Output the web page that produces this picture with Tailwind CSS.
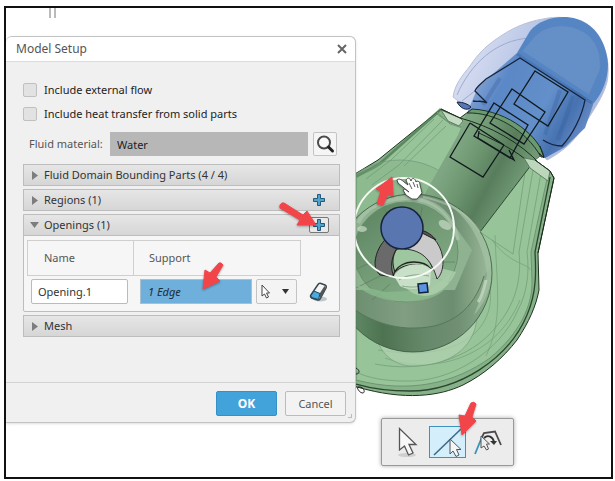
<!DOCTYPE html>
<html lang="en">
<head>
  <meta charset="UTF-8" />
  <meta name="viewport" content="width=device-width, initial-scale=1" />
  <title>Model Setup</title>
  <script src="https://cdn.jsdelivr.net/npm/@tailwindcss/browser@4"></script>
</head>
<body class="min-h-screen flex flex-col bg-white pt-[6px] pl-1 pr-[2px] pb-[2px] font-['Noto_Sans','Open_Sans',sans-serif] text-[11px] leading-4 text-[#333]">
  <main class="relative flex-1 border-2 border-[#111] overflow-hidden bg-white">

    <!-- 3D viewport -->
    <svg class="absolute left-0 top-0 w-[605px] h-[468px]" viewBox="6 8 605 468" fill="none" aria-hidden="true">
      <defs>
        <linearGradient id="neck" x1="445" y1="165" x2="510" y2="200" gradientUnits="userSpaceOnUse">
          <stop offset="0" stop-color="#7fa682" /><stop offset=".3" stop-color="#6f9872" /><stop offset=".65" stop-color="#587d5c" /><stop offset="1" stop-color="#719975" />
        </linearGradient>
        <linearGradient id="ball" x1="356" y1="0" x2="494" y2="0" gradientUnits="userSpaceOnUse">
          <stop offset="0" stop-color="#6d8f70" /><stop offset=".35" stop-color="#819e83" /><stop offset=".7" stop-color="#6c8d70" /><stop offset=".85" stop-color="#86a587" /><stop offset="1" stop-color="#9fbd9f" />
        </linearGradient>
        <linearGradient id="band" x1="356" y1="0" x2="492" y2="0" gradientUnits="userSpaceOnUse">
          <stop offset="0" stop-color="#5f8763" /><stop offset=".2" stop-color="#4d7351" /><stop offset=".5" stop-color="#66886a" /><stop offset=".75" stop-color="#708f73" /><stop offset="1" stop-color="#8cb08d" />
        </linearGradient>
        <linearGradient id="bowl" x1="370" y1="200" x2="440" y2="300" gradientUnits="userSpaceOnUse">
          <stop offset="0" stop-color="#5d8461" /><stop offset=".5" stop-color="#739b76" /><stop offset="1" stop-color="#86b189" />
        </linearGradient>
        <linearGradient id="cap" x1="475" y1="80" x2="590" y2="145" gradientUnits="userSpaceOnUse">
          <stop offset="0" stop-color="#86a3d4" /><stop offset=".2" stop-color="#5b88c6" /><stop offset=".55" stop-color="#638fca" /><stop offset=".75" stop-color="#4672b0" /><stop offset="1" stop-color="#7898cf" />
        </linearGradient>
        <linearGradient id="shell" x1="455" y1="50" x2="600" y2="120" gradientUnits="userSpaceOnUse">
          <stop offset="0" stop-color="#dfe4f4" /><stop offset=".4" stop-color="#b9c6e6" /><stop offset="1" stop-color="#a9b9df" />
        </linearGradient>
        <clipPath id="ballClip"><circle cx="413" cy="273" r="79" /></clipPath>
      </defs>

      <path d="M50 8v10M55 8v10" stroke="#777" />

      <!-- blue cap -->
      <path d="M453 97C455 84 462 76 470 66C478 54 485 47 495 40C510 29 525 22 543 19C570 13 590 24 599 38C607 49 610 66 607 82C603 98 592 112 583 127C574 142 562 152 547 160L520 130L470 110Z" fill="url(#shell)" stroke="#b9c1d8" />
      <path d="M457 95C470 65 495 40 530 38M462 101L517 58" stroke="#9fabce" />
      <path d="M517 53L594 102L585 128L565 147L545 158L467 113L478 87Z" fill="url(#cap)" />
      <path d="M517 53L530 31C540 19 560 14 577 19C596 25 606 42 608 64C608 80 602 93 594 103Z" fill="#5585c2" />
      <path d="M522 51L535 36C545 26 560 24 572 27C594 33 602 50 600 70L589 95Z" fill="#648fc7" stroke="#5b86c1" />
      <path d="M517 54L592 103" stroke="#3e6ba9" stroke-width="3" opacity=".6" />
      <path d="M560 90L545 135M573 96L558 140M500 78L483 105" stroke="#365e9c" stroke-width="4" opacity=".3" />
      <path d="M487 103L475 91C476 87 482 83 486 79L520 58L585 100C582 116 573 134 562 146C556 146 549 144 543 140M473 101C478 102 482 100 487 103" stroke="#15233c" stroke-width="1.3" />
      <path d="M457 102C463 102 468 104 471 107C467 112 460 108 457 102Z" fill="#5577b4" stroke="#16233a" />

      <!-- green body -->
      <path d="M441 109L460 118L468 112C497 113 525 129 541 155L535 160L550 171L554 178L538 253L539 290C536 306 529 322 517 340C503 358 485 374 463 385C440 396 405 401 357 387L340 380V183L378 160Z" fill="#86b189" stroke="#1f3321" />
      <path d="M437 114L384 160L356 178V380C410 394 455 383 490 358C520 333 533 305 532 280L531 252L547 179L534 165L500 140L448 122Z" fill="#98c49a" stroke="#6c966f" />
      <path d="M434 119L391 160L366 179M443 120L399 165L372 185M446 126L404 166" stroke="#7ba57f" />
      <path d="M356 176C366 171 378 167 384 160L441 109" stroke="#4b7a4f" stroke-width="3" opacity=".65" />
      <path d="M550 177L535 252C536 270 537 292 527 315C508 360 458 391 410 391C388 391 370 388 356 384" stroke="#29472c" stroke-width="1.3" />
      <path d="M541 173L527 252C530 275 526 295 518 310C500 352 450 383 405 381C385 381 368 378 356 372M533 170L519 252C522 280 515 305 496 327C470 360 420 373 375 364M526 165L513 254L480 232" stroke="#709a73" opacity=".7" />
      <path d="M492 240C510 265 530 264 530 270M488 280C500 320 470 365 378 350M495 235C497 290 503 320 486 356M520 300C495 360 430 375 385 358" stroke="#6f9b73" opacity=".6" />
      <path d="M378 343C386 360 400 366 413 366C447 366 474 350 477 318Z" fill="#b2d2b1" stroke="#78a07b" opacity=".7" />
      <circle cx="400" cy="237" r="77" fill="#74a278" fill-opacity=".3" stroke="#73977a" stroke-opacity=".7" />
      <path d="M437 112L450 124L475 132" stroke="#729a76" />
      <path d="M441 110L460 118L463 121L459 126L448 121Z" fill="#c6dcc5" stroke="#5b7f5f" />

      <!-- neck -->
      <path d="M467 113C495 112 526 130 541 155L535 160L480 232L423 197L458 135Z" fill="url(#neck)" />
      <path d="M535 160L480 232" stroke="#2f4b32" />
      <path d="M467 113C495 112 526 130 541 157L544 157C540 138 510 111 472 109Z" fill="#6c9a70" stroke="#1e3320" />
      <path d="M441 109L460 118C490 126 520 142 541 165M479 133C500 143 515 150 530 163M540 146L544 158L539 153" stroke="#1a2c1c" />
      <path d="M524 158L535 160L550 171L548 181L530 168Z" fill="#bcd7bb" stroke="#5c825f" />
      <path d="M535 160L550 171L554 178L538 253" stroke="#1a2c1c" />

      <!-- ball -->
      <circle cx="413" cy="273" r="79" fill="url(#ball)" />
      <g clip-path="url(#ballClip)">
        <path d="M340 297C360 319 392 329 415 328C450 328 474 310 484 276L500 250V370H340Z" fill="url(#band)" />
        <path d="M425 192C460 205 482 232 487 275C484 290 480 300 474 315C498 290 501 240 470 210Z" fill="#a3c2a3" opacity=".75" />
        <path d="M340 297C360 319 392 329 415 328C450 328 474 310 484 276" stroke="#57775a" />
        <path d="M478 302C482 297 484 288 486 280" stroke="#cbdccb" stroke-width="3" opacity=".7" />
        <path d="M340 200C370 185 425 190 447 215L472 250L455 290L340 290Z" fill="#8fb290" />
        <ellipse cx="406" cy="252" rx="52" ry="50" fill="url(#bowl)" stroke="#69906d" />
        <path d="M358 223C368 202 402 192 428 202C444 208 454 222 458 240" stroke="#b4ccb4" stroke-width="4" opacity=".55" />
        <path d="M350 272L372 262M352 290L380 276M372 300L390 284M455 262L437 262M450 282L432 278M385 210L390 222M422 207L420 222" stroke="#55795a" opacity=".6" />
        <path d="M356 285C376 305 430 308 446 288L452 272L430 290L385 292Z" fill="#8bb98d" opacity=".8" />
        <ellipse cx="362" cy="229" rx="5" ry="3" fill="#c9dcc8" opacity=".7" />
        <ellipse cx="445" cy="225" rx="7" ry="4" fill="#c9dac8" opacity=".7" transform="rotate(30 445 225)" />
      </g>
      <circle cx="413" cy="273" r="79" stroke="#3c5a3f" stroke-opacity=".8" />
      <path d="M480 232C468 213 448 202 423 197" stroke="#b0c4b0" stroke-width="2" opacity=".6" />
      <path d="M400 280C410 300 440 305 456 272L440 268Z" fill="#b5d4b4" opacity=".7" />

      <!-- inlet opening -->
      <path d="M375 262C376 252 381 243 387 238L397 248C391 258 390 268 394 277L380 275C376 271 375 267 375 262Z" fill="#696a69" stroke="#222" />
      <path d="M397 249C405 247 413 248 420 252C427 257 431 263 433 270C425 264 406 261 395 272C392 264 392 256 397 249Z" fill="#9fc79f" stroke="#222" />
      <path d="M420 230C434 234 443 248 443 262C443 269 441 275 437 279C432 262 424 250 404 249Z" fill="#c9cac9" stroke="#333" />
      <path d="M420 230C427 231 433 236 436 240L422 233Z" fill="#555" stroke="#222" />
      <path d="M393 276C396 266 405 262 414 262C422 262 428 265 431 269" stroke="#222" stroke-width="1.3" />
      <path d="M394 276C400 265 420 260 431 269L430 285C420 290 406 290 400 286Z" fill="#c8e0c7" />
      <path d="M399 280C407 274 420 274 429 276M402 286C412 288 420 287 426 284" stroke="#89a78a" />
      <circle cx="404" cy="228" r="50" stroke="#f5faf4" stroke-width="2" />
      <circle cx="402" cy="228" r="21" fill="#5a76b0" stroke="#17233f" stroke-width="1.5" />
      <path d="M418 284L427 283L428 292L419 293Z" fill="#5c93e0" stroke="#10213a" stroke-width="1.5" />

      <!-- sketch rectangles -->
      <path d="M535 71L568 92L548 126L514 104ZM512 89L545 112L524 144L490 123ZM494 103L528 125L510 158L474 136ZM470 123L450 157L483 177L504 145M470 123L504 145M479 131L478 138L514 160L509 150" stroke="#10191c" stroke-width="1.3" />
      <path d="M356 368C360 370 360 374 356 374M358 387C363 386 366 392 363 393C360 393 358 390 357 387" stroke="#222" />
    </svg>

    <!-- Model Setup dialog -->
    <form class="relative mt-7 w-[350px] border border-[#c3c3c3] border-l-0 rounded-t-md rounded-br-md bg-[#f0f0f0] shadow-sm">
      <header class="flex items-center justify-between h-[25px] pl-[10px] pr-[7px] bg-white border-b border-[#dcdcdc] rounded-t-md">
        <h1 class="text-xs text-[#555]">Model Setup</h1>
        <button type="button" aria-label="Close">
          <svg class="size-3" viewBox="0 0 12 12" fill="none" stroke="#666" stroke-width="2"><path d="M2 2l8 8M10 2l-8 8" /></svg>
        </button>
      </header>

      <div class="flex flex-col pt-4 pl-[17px] pr-[15px] pb-[45px]">
        <label class="flex items-center gap-[7px] h-6 text-[#222]">
          <input type="checkbox" class="appearance-none size-[14px] border border-[#c0c0c0] rounded-xs bg-[#e2e2e2]" />
          Include external flow
        </label>
        <label class="flex items-center gap-[7px] h-6 text-[#222]">
          <input type="checkbox" class="appearance-none size-[14px] border border-[#c0c0c0] rounded-xs bg-[#e2e2e2]" />
          Include heat transfer from solid parts
        </label>

        <div class="flex items-center mt-[6px] pl-[6px] pr-[3px]">
          <label for="material" class="w-[81px] text-[#555]">Fluid material:</label>
          <input id="material" type="text" value="Water" readonly class="flex-1 min-w-0 h-6 px-[7px] bg-[#b7b7b7] text-[#222]" />
          <button type="button" aria-label="Search material" class="flex items-center justify-center size-6 ml-[5px] border border-[#c4c4c4] rounded-xs bg-[#f5f5f5]">
            <svg class="size-5" viewBox="0 0 20 20" fill="none"><circle cx="9" cy="8.500" r="6" fill="#fafafa" stroke="#4a4a4a" stroke-width="2" /><path d="M13.500 13l4 4" stroke="#222" stroke-width="3" stroke-linecap="round" /></svg>
          </button>
        </div>

        <div class="flex flex-col gap-[3px] mt-2">
          <section class="flex items-center h-[22px] px-[8px] border border-[#bdbdbd] bg-linear-to-b from-[#e6e6e6] to-[#d6d6d6]">
            <button type="button" class="flex items-center gap-[6px]">
              <svg class="w-[6px] h-[9px]" viewBox="0 0 6 9" fill="#7d7d7d"><path d="M0 0l6 4.500L0 9z" /></svg>
              Fluid Domain Bounding Parts (4 / 4)
            </button>
          </section>
          <section class="flex items-center justify-between h-[22px] pl-[8px] pr-[10px] border border-[#bdbdbd] bg-linear-to-b from-[#e6e6e6] to-[#d6d6d6]">
            <button type="button" class="flex items-center gap-[6px]">
              <svg class="w-[6px] h-[9px]" viewBox="0 0 6 9" fill="#7d7d7d"><path d="M0 0l6 4.500L0 9z" /></svg>
              Regions (1)
            </button>
            <button type="button" aria-label="Add region" class="flex items-center justify-center w-5 h-4 border border-transparent">
              <svg class="size-3" viewBox="0 0 12 12" fill="#4fa3cf" stroke="#245a78"><path d="M4.500 .5h3v4h4v3h-4v4h-3v-4h-4v-3h4z" /></svg>
            </button>
          </section>
          <section class="border border-[#bdbdbd] rounded-b-xs bg-[#f6f6f6]">
            <div class="flex items-center justify-between h-[21px] pl-[6px] pr-[10px] border-b border-[#bdbdbd] bg-linear-to-b from-[#e6e6e6] to-[#d6d6d6]">
              <button type="button" class="flex items-center gap-[5px]">
                <svg class="w-[9px] h-[6px]" viewBox="0 0 9 6" fill="#7d7d7d"><path d="M0 0h9L4.500 6z" /></svg>
                Openings (1)
              </button>
              <button type="button" aria-label="Add opening" class="flex items-center justify-center w-5 h-4 border border-[#777] rounded-xs bg-[#e9e9e9]">
                <svg class="size-3" viewBox="0 0 12 12" fill="#4fa3cf" stroke="#245a78"><path d="M4.500 .5h3v4h4v3h-4v4h-3v-4h-4v-3h4z" /></svg>
              </button>
            </div>
            <div class="pl-[3px] pt-1 pb-[7px]">
              <table class="table-fixed w-full border-separate border-spacing-0">
                <colgroup>
                  <col class="w-[107px]" />
                  <col class="w-[122px]" />
                  <col class="w-[45px]" />
                  <col />
                </colgroup>
                <thead>
                  <tr class="h-9 text-left text-[#555]">
                    <th class="pl-4 font-normal border border-[#cfcfcf]">Name</th>
                    <th class="pl-[15px] font-normal border border-l-0 border-[#cfcfcf]" colspan="2">Support</th>
                    <td></td>
                  </tr>
                </thead>
                <tbody>
                  <tr>
                    <td class="pt-[3px] pl-1"><input type="text" value="Opening.1" aria-label="Name" class="block w-[97px] h-[25px] px-[6px] border border-[#bbb] rounded-xs bg-white" /></td>
                    <td class="pt-[3px] pl-[6px]"><input type="text" value="1 Edge" readonly aria-label="Support" class="block w-[112px] h-[25px] px-[7px] border border-[#a9c0cf] bg-[#6fafdb] italic text-[#1c2d3a]" /></td>
                    <td class="pt-[3px]">
                      <button type="button" aria-label="Selection mode" class="flex items-center justify-between w-[41px] h-[25px] pl-1 pr-[7px] border border-[#c4c4c4] rounded-xs bg-[#f4f4f4]">
                        <svg class="w-[10px] h-[15px]" viewBox="0 0 10 15" fill="#fff" stroke="#444"><path d="M1 1v11l2.500-2 2 4 2-1-2-4h3z" /></svg>
                        <svg class="w-[7px] h-[5px]" viewBox="0 0 7 5" fill="#333"><path d="M0 0h7L3.500 5z" /></svg>
                      </button>
                    </td>
                    <td class="pt-[3px] pl-[8px]">
                      <button type="button" aria-label="Clear support" class="block">
                        <svg class="w-[19px] h-5" viewBox="0 0 19 20" fill="none">
                          <ellipse cx="11" cy="17" rx="7" ry="2.500" fill="#bcc7cc" />
                          <path d="M9 2.500Q10 .8 12 1.500L16 3Q17.800 4 17 6L11 17Q10 18.500 8 17.800L2.500 16Q1 15 1.800 13Z" fill="#f5f5f5" stroke="#3b464d" stroke-width="1.500" />
                          <path d="M11 17L17 6 15.500 4 10 12.500z" fill="#50585d" />
                          <path d="M5 9L11 11.500 9.500 17.500 2.500 15.500 2 13.500z" fill="#4ba9dc" stroke="#1e4962" />
                        </svg>
                      </button>
                    </td>
                  </tr>
                </tbody>
              </table>
            </div>
          </section>
          <section class="flex items-center h-[22px] px-[8px] border border-[#bdbdbd] bg-linear-to-b from-[#e6e6e6] to-[#d6d6d6]">
            <button type="button" class="flex items-center gap-[6px]">
              <svg class="w-[6px] h-[9px]" viewBox="0 0 6 9" fill="#7d7d7d"><path d="M0 0l6 4.500L0 9z" /></svg>
              Mesh
            </button>
          </section>
        </div>
      </div>

      <footer class="relative flex justify-end gap-2 pt-2 pr-[9px] pb-[6px] border-t border-[#d2d2d2]">
        <button type="submit" class="w-[61px] h-[25px] border border-[#3590c8] rounded-xs bg-[#42a2da] text-xs font-bold text-white">OK</button>
        <button type="button" class="w-[61px] h-[25px] border border-[#bcbcbc] rounded-xs bg-[#f3f3f3] text-[#555]">Cancel</button>
        <svg class="absolute right-[2px] bottom-[3px] size-[5px]" viewBox="0 0 5 5" fill="#bbb"><path d="M3 0h1v4H0V3h3z" /></svg>
      </footer>
    </form>

    <!-- selection toolbar -->
    <div role="toolbar" aria-label="Selection" class="absolute left-[375px] top-[410px] flex gap-[3px] px-[7px] py-[7px] border border-[#999] rounded-xs bg-[#ececec] shadow-[0_0_4px_#aaa]">
      <button type="button" aria-label="Select" class="flex items-center justify-center w-[37px] h-8">
        <svg class="w-[37px] h-8" viewBox="0 0 37 32" fill="none">
          <ellipse cx="18" cy="29" rx="9" ry="2" fill="#cfcfcf" />
          <path d="M10.500 2.500V24l5-4 4 9 4.500-2-4-8.500h7z" fill="#f8f8f8" stroke="#555" stroke-width="1.300" />
        </svg>
      </button>
      <button type="button" aria-label="Select edge" class="flex items-center justify-center w-[37px] h-8 border border-[#3c93bf] bg-[#d5eefb]">
        <svg class="w-[35px] h-[30px]" viewBox="0 0 35 30" fill="none">
          <path d="M4 28L31 2" stroke="#3c6d88" stroke-width="1.600" />
          <path d="M20 12v15l3-3 3 5.500 3-1.500-2.500-5.500h4.500z" fill="#f5f5f5" stroke="#4b5560" />
        </svg>
      </button>
      <button type="button" aria-label="Select chain" class="flex items-center justify-center w-[37px] h-8">
        <svg class="w-[37px] h-8" viewBox="0 0 37 32" fill="none">
          <path d="M6 28L13 11" stroke="#3792bd" stroke-width="1.800" />
          <path d="M13 11L15 7 26 5.500 32 19" stroke="#4a4a4a" stroke-width="1.800" />
          <path d="M12 10V22l3-2 2.500 4 2-1-2-5h3z" fill="#eee" stroke="#555" />
          <path d="M15 12C19 8 24 11 25 16" stroke="#333" stroke-width="1.800" />
          <path d="M21 15h7l-3 4z" fill="#333" />
        </svg>
      </button>
    </div>

    <!-- red callout arrows and hand pointer -->
    <svg class="absolute left-0 top-0 w-[605px] h-[468px] pointer-events-none drop-shadow-[0_1px_1px_#0005]" viewBox="6 8 605 468" fill="#f2454a" aria-hidden="true">
      <path d="M282 203Q279 205 280 208L300 220 297 225 316 225 307 211 303 215 284 203Z" stroke="#f2454a" stroke-linejoin="round" />
      <path d="M219 263Q221 262 223 265L216 277 220 281 203 289 205 270 210 273Z" stroke="#f2454a" stroke-linejoin="round" />
      <path d="M377 204L381 191 376 189 392 177 393 196 388 194 383 205Z" stroke="#f2454a" stroke-linejoin="round" />
      <path d="M471 403Q474 401 476 404L472 417 476 421 462 435 459 415 465 416Z" stroke="#f2454a" stroke-linejoin="round" />
      <path d="M397 180C399 178 402 180 404 182L408 185 406 180C408 177 410 178 411 181 412 177 415 178 416 182 418 180 420 182 420 185L422 193 417 199 412 199 406 195 403 190C405 188 407 191 409 192L398 183Z" fill="#fff" stroke="#333" stroke-width=".8" />
      <path d="M409 183l3 6M413 182l2 5M417 184l1 4" stroke="#333" stroke-width=".8" />
    </svg>
  </main>
</body>
</html>
